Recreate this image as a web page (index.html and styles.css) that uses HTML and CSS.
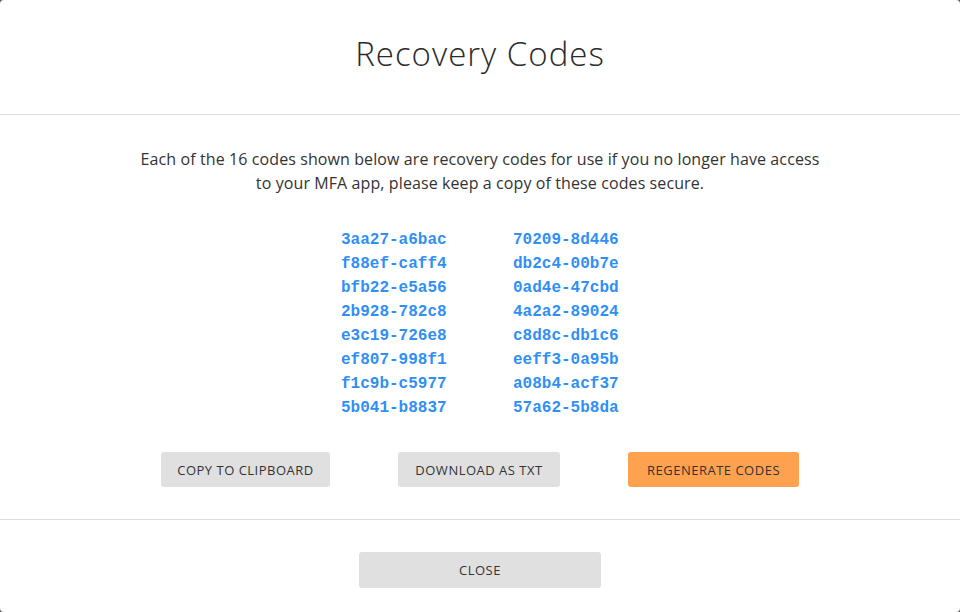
FILE: index.html
```html
<!DOCTYPE html>
<html lang="en">
<head>
<meta charset="utf-8">
<title>Recovery Codes</title>
<link rel="stylesheet" href="styles.css">
</head>
<body>
<div class="modal">
  <header class="modal-header">
    <h1 class="modal-title">Recovery Codes</h1>
  </header>
  <section class="modal-body">
    <p class="intro">Each of the 16 codes shown below are recovery codes for use if you no longer have access<br>to your MFA app, please keep a copy of these codes secure.</p>
    <div class="codes">
      <span>3aa27-a6bac</span><span>70209-8d446</span>
      <span>f88ef-caff4</span><span>db2c4-00b7e</span>
      <span>bfb22-e5a56</span><span>0ad4e-47cbd</span>
      <span>2b928-782c8</span><span>4a2a2-89024</span>
      <span>e3c19-726e8</span><span>c8d8c-db1c6</span>
      <span>ef807-998f1</span><span>eeff3-0a95b</span>
      <span>f1c9b-c5977</span><span>a08b4-acf37</span>
      <span>5b041-b8837</span><span>57a62-5b8da</span>
    </div>
    <div class="actions">
      <button class="btn btn-copy">COPY TO CLIPBOARD</button>
      <button class="btn btn-download">DOWNLOAD AS TXT</button>
      <button class="btn btn-primary btn-regen">REGENERATE CODES</button>
    </div>
  </section>
  <footer class="modal-footer">
    <button class="btn btn-close">CLOSE</button>
  </footer>
</div>
</body>
</html>
```

FILE: styles.css
```css
* { box-sizing: border-box; }
html, body { margin: 0; padding: 0; }
body {
  background: #5c5c5c;
  font-family: "Open Sans", "Liberation Sans", sans-serif;
  color: #333;
}
.modal {
  width: 960px;
  height: 612px;
  background: #fff;
  border-radius: 4px;
  display: flex;
  flex-direction: column;
  overflow: hidden;
}
.modal-header {
  height: 115px;
  border-bottom: 1px solid #dcdcdc;
  display: flex;
  align-items: center;
  justify-content: center;
  padding-bottom: 8px;
}
.modal-title {
  margin: 0;
  font-weight: 300;
  font-size: 33px;
  color: #2b2b2b;
  letter-spacing: 1px;
}
.modal-body {
  height: 405px;
  border-bottom: 1px solid #dcdcdc;
  display: flex;
  flex-direction: column;
  align-items: center;
  padding-top: 32px;
}
.intro {
  margin: 0;
  text-align: center;
  font-size: 16px;
  line-height: 24px;
  letter-spacing: 0.1px;
  color: #333;
}
.codes {
  margin-top: 33px;
  display: grid;
  grid-template-columns: 106px 106px;
  column-gap: 66px;
  font-family: "Liberation Mono", "Courier New", monospace;
  font-weight: bold;
  font-size: 16px;
  line-height: 24px;
  color: #2f8ff5;
}
.actions {
  margin-top: 32px;
  display: flex;
  gap: 68px;
}
.btn {
  border: none;
  border-radius: 3px;
  background: #e0e0e0;
  color: #333;
  font-family: "Open Sans", "Liberation Sans", sans-serif;
  font-size: 13px;
  letter-spacing: 0.5px;
  height: 35px;
  padding: 0;
}
.btn-copy { width: 169px; }
.btn-download { width: 162px; }
.btn-regen { width: 171px; }
.btn-primary { background: #ffa24f; }
.modal-footer {
  flex: 1;
  display: flex;
  justify-content: center;
  padding-top: 32px;
}
.btn-close { width: 242px; height: 36px; }
```
